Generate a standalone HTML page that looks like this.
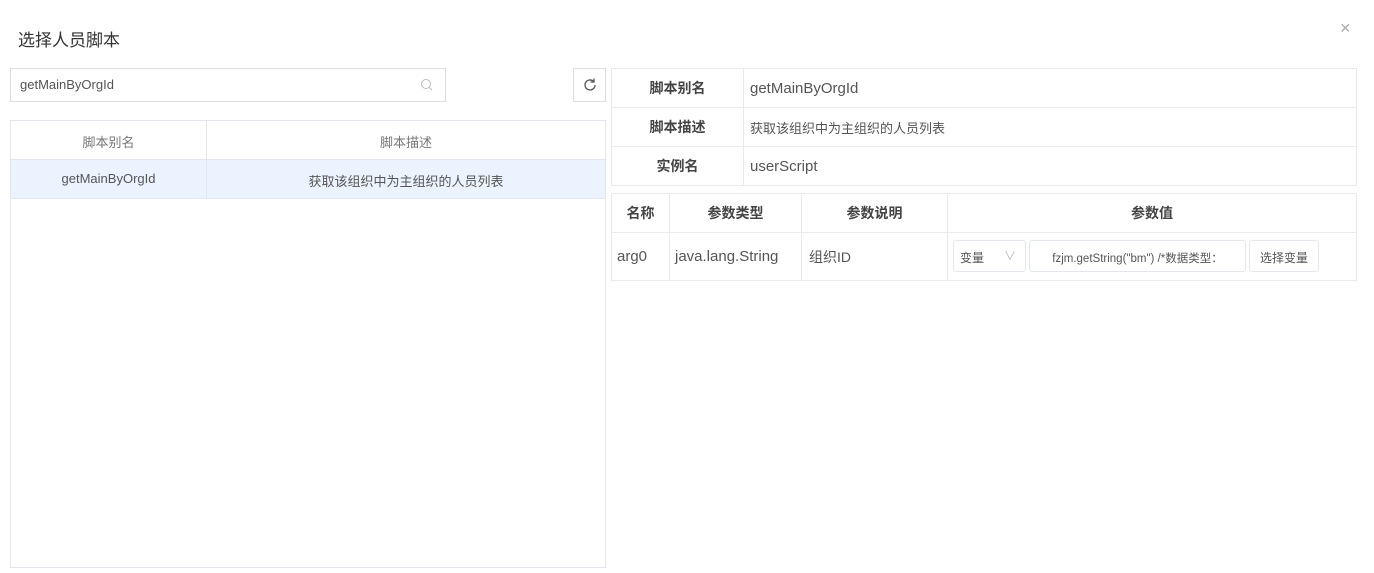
<!DOCTYPE html>
<html><head><meta charset="utf-8"><style>
*{box-sizing:border-box;margin:0;padding:0}
body{width:1374px;height:573px;background:#fff;font-family:"Liberation Sans","Noto Sans CJK SC",sans-serif;color:#333;position:relative;overflow:hidden}
.a{position:absolute}
.b{border:1px solid #e4e7ed}
table{border-collapse:collapse;position:absolute}
td{border:1px solid #e8eaee;font-size:15px;color:#555}
</style></head><body>
<div class="a" style="left:18px;top:26px;font-size:17px;color:#333">选择人员脚本</div>
<div class="a" style="left:1340px;top:18px;font-size:18px;color:#aaa">×</div>
<div class="a b" style="left:10px;top:68px;width:436px;height:34px;border-color:#dcdfe6"></div>
<div class="a" style="left:20px;top:77px;font-size:13px;color:#555">getMainByOrgId</div>
<svg class="a" style="left:420px;top:78px" width="13" height="13" viewBox="0 0 13 13"><circle cx="6" cy="6" r="4.5" fill="none" stroke="#bbb"/><path d="M9.5 9.5l2.5 2.5" stroke="#bbb"/></svg>
<div class="a b" style="left:573px;top:68px;width:33px;height:34px;border-color:#dcdfe6"></div>
<svg class="a" style="left:582px;top:77px" width="16" height="16" viewBox="0 0 16 16"><path d="M13 8a5 5 0 1 1-1.5-3.6" fill="none" stroke="#555" stroke-width="1.3"/><path d="M12 1.5v3.5h-3.5" fill="none" stroke="#555" stroke-width="1.3"/></svg>
<div class="a b" style="left:10px;top:120px;width:596px;height:448px"></div>
<div class="a" style="left:11px;top:159px;width:594px;height:40px;background:#ebf3fe;border-bottom:1px solid #e4e7ed"></div>
<div class="a" style="left:206px;top:121px;width:1px;height:78px;background:#e4e7ed"></div>
<div class="a" style="left:11px;top:159px;width:594px;height:1px;background:#e4e7ed"></div>
<div class="a" style="left:11px;top:132px;width:195px;text-align:center;font-size:13px;color:#777">脚本别名</div>
<div class="a" style="left:207px;top:132px;width:398px;text-align:center;font-size:13px;color:#777">脚本描述</div>
<div class="a" style="left:11px;top:171px;width:195px;text-align:center;font-size:13px;color:#555">getMainByOrgId</div>
<div class="a" style="left:207px;top:171px;width:398px;text-align:center;font-size:13px;color:#555">获取该组织中为主组织的人员列表</div>
<table style="left:611px;top:68px;width:746px">
<tr style="height:39px"><td style="width:132px;text-align:center;font-weight:bold;font-size:14px;color:#444">脚本别名</td><td style="padding-left:6px">getMainByOrgId</td></tr>
<tr style="height:39px"><td style="text-align:center;font-weight:bold;font-size:14px;color:#444">脚本描述</td><td style="padding-left:6px;font-size:13px">获取该组织中为主组织的人员列表</td></tr>
<tr style="height:39px"><td style="text-align:center;font-weight:bold;font-size:14px;color:#444">实例名</td><td style="padding-left:6px">userScript</td></tr>
</table>
<table style="left:611px;top:193px;width:746px">
<tr style="height:39px;font-weight:bold"><td style="width:58px;text-align:center;font-weight:bold;font-size:14px;color:#444">名称</td><td style="width:132px;text-align:center;font-weight:bold;font-size:14px;color:#444">参数类型</td><td style="width:146px;text-align:center;font-weight:bold;font-size:14px;color:#444">参数说明</td><td style="text-align:center;font-weight:bold;font-size:14px;color:#444">参数值</td></tr>
<tr style="height:48px"><td style="padding-left:5px">arg0</td><td style="padding-left:5px">java.lang.String</td><td style="padding-left:7px;font-size:14px">组织ID</td><td></td></tr>
</table>
<div class="a b" style="left:953px;top:240px;width:73px;height:32px;border-radius:3px;font-size:12px;color:#555;padding:8px 0 0 6px">变量<span style="position:absolute;left:50px;top:6px;color:#bbb">∨</span></div>
<div class="a b" style="left:1029px;top:240px;width:217px;height:32px;border-radius:3px;font-size:11.5px;color:#555;padding-top:9px;text-align:center;white-space:nowrap;overflow:hidden">fzjm.getString("bm") /*数据类型：</div>
<div class="a b" style="left:1249px;top:240px;width:70px;height:32px;border-radius:3px;font-size:12px;color:#555;padding-top:8px;text-align:center">选择变量</div>
</body></html>
